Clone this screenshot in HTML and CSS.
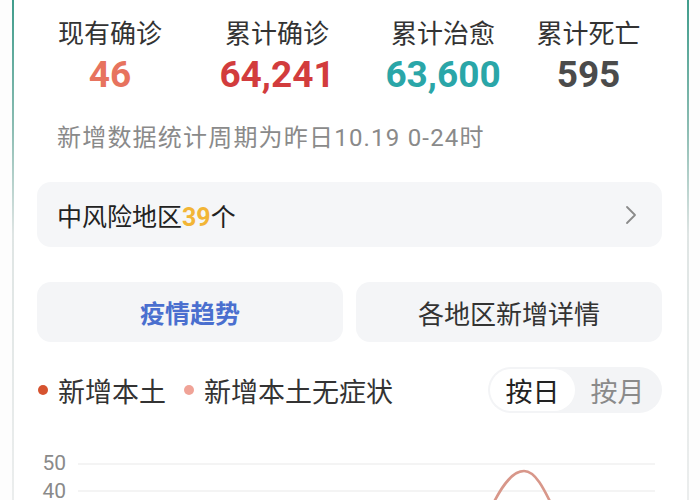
FILE: index.html
```html
<!DOCTYPE html>
<html lang="zh">
<head>
<meta charset="utf-8">
<link rel="stylesheet" href="styles.css">
</head>
<body>
<div class="card">
  <div class="stats">
    <div class="stat">
      <div class="label">现有确诊</div>
      <div class="num c-now">46</div>
    </div>
    <div class="stat">
      <div class="label">累计确诊</div>
      <div class="num c-total">64,241</div>
    </div>
    <div class="stat">
      <div class="label">累计治愈</div>
      <div class="num c-cured">63,600</div>
    </div>
    <div class="stat">
      <div class="label">累计死亡</div>
      <div class="num c-dead">595</div>
    </div>
  </div>
  <div class="note">新增数据统计周期为昨日10.19 0-24时</div>
  <div class="risk">
    <span class="risk-text">中风险地区<span class="risk-num">39</span>个</span>
    <svg class="chev" width="14" height="24" viewBox="0 0 14 24"><polyline points="3,4 11,12 3,20" fill="none" stroke="#8a8a8a" stroke-width="1.8" stroke-linecap="round" stroke-linejoin="round"/></svg>
  </div>
  <div class="tabs">
    <div class="tab active">疫情趋势</div>
    <div class="tab">各地区新增详情</div>
  </div>
  <div class="legend-row">
    <div class="legend">
      <span class="dot dot1"></span><span class="lg">新增本土</span>
      <span class="dot dot2"></span><span class="lg">新增本土无症状</span>
    </div>
    <div class="toggle">
      <span class="opt on">按日</span>
      <span class="opt">按月</span>
    </div>
  </div>
  <svg class="chart" width="625" height="70" viewBox="0 0 625 70">
    <line x1="41" y1="23" x2="618" y2="23" stroke="#f0f0f0" stroke-width="1.5"/>
    <line x1="41" y1="50" x2="618" y2="50" stroke="#f0f0f0" stroke-width="1.5"/>
    <text x="29" y="29" text-anchor="end" class="axis">50</text>
    <text x="29" y="57" text-anchor="end" class="axis">40</text>
    <path d="M449 78 C462 48, 474 30, 487 30 C498 30, 506 45, 520 75" fill="none" stroke="#d8978a" stroke-width="2.6" stroke-linecap="round"/>
  </svg>
</div>
</body>
</html>
```
FILE: styles.css
```css
html, body {
  margin: 0;
  padding: 0;
  background: #fdfdfd;
  overflow: hidden;
  height: 500px;
}
body {
  font-family: Roboto, "Noto Sans CJK SC", sans-serif;
  color: #2a2a2a;
}
.card {
  margin-left: 12px;
  width: 677px;
  height: 520px;
  background: #ffffff;
  border-style: solid;
  border-width: 0 2px;
  border-image: linear-gradient(to bottom, #3f9d8c 0%, #8cbdb3 25%, #dfe5e4 45%, #eceeee 100%) 1;
  padding: 0 25px 0 23px;
  box-sizing: border-box;
}
.stats {
  display: grid;
  grid-template-columns: 146px 188px 144px 147px;
  padding-top: 16px;
}
.stat {
  display: flex;
  flex-direction: column;
  align-items: center;
}
.label {
  font-family: "Noto Sans CJK SC", sans-serif;
  font-size: 26px;
  line-height: 32px;
  color: #333;
}
.num {
  font-family: Roboto, sans-serif;
  font-weight: 700;
  font-size: 37px;
  line-height: 44px;
  margin-top: 5px;
}
.c-now { color: #e7735e; }
.c-total { color: #d23c3d; }
.c-cured { color: #2aa6a8; }
.c-dead { color: #4b4b4b; }
.note {
  margin-top: 26px;
  padding-left: 20px;
  font-size: 24px;
  line-height: 30px;
  color: #8a8a8a;
  letter-spacing: 1.2px;
}
.risk {
  margin-top: 29px;
  height: 65px;
  background: #f5f6f8;
  border-radius: 14px;
  display: flex;
  align-items: center;
  justify-content: space-between;
  padding: 0 24px 0 20px;
}
.risk-text {
  font-family: "Noto Sans CJK SC", sans-serif;
  font-size: 25px;
  color: #222;
}
.risk-num {
  font-family: Roboto, sans-serif;
  font-weight: 700;
  color: #f2b536;
}
.tabs {
  margin-top: 35px;
  display: grid;
  grid-template-columns: 1fr 1fr;
  gap: 13px;
}
.tab {
  height: 60px;
  background: #f4f5f7;
  border-radius: 14px;
  display: flex;
  align-items: center;
  justify-content: center;
  font-family: "Noto Sans CJK SC", sans-serif;
  font-size: 25px;
  color: #333;
}
.tab + .tab {
  font-size: 26px;
}
.tab.active {
  color: #4a6fcf;
  font-weight: 700;
}
.legend-row {
  margin-top: 25px;
  display: flex;
  align-items: center;
  justify-content: space-between;
}
.legend {
  display: flex;
  align-items: center;
  padding-left: 0;
  font-family: "Noto Sans CJK SC", sans-serif;
  font-size: 27px;
  color: #333;
}
.dot {
  width: 10px;
  height: 10px;
  border-radius: 50%;
  margin-right: 10px;
}
.dot1 { background: #d6532f; margin-left: 1px; }
.dot2 { background: #f0a397; margin-left: 18px; }
.toggle {
  display: flex;
  align-items: center;
  height: 46px;
  width: 174px;
  background: #f3f4f6;
  border-radius: 23px;
  padding: 2px;
  box-sizing: border-box;
}
.opt {
  font-family: "Noto Sans CJK SC", sans-serif;
  font-size: 27px;
  color: #8a8a8a;
  height: 42px;
  width: 86px;
  display: flex;
  align-items: center;
  justify-content: center;
  border-radius: 21px;
}
.opt.on {
  background: #ffffff;
  color: #222;
}
.chart {
  display: block;
  margin-top: 28px;
  overflow: visible;
}
.axis {
  font-family: Roboto, sans-serif;
  font-size: 21px;
  fill: #8a8a8a;
}
```
